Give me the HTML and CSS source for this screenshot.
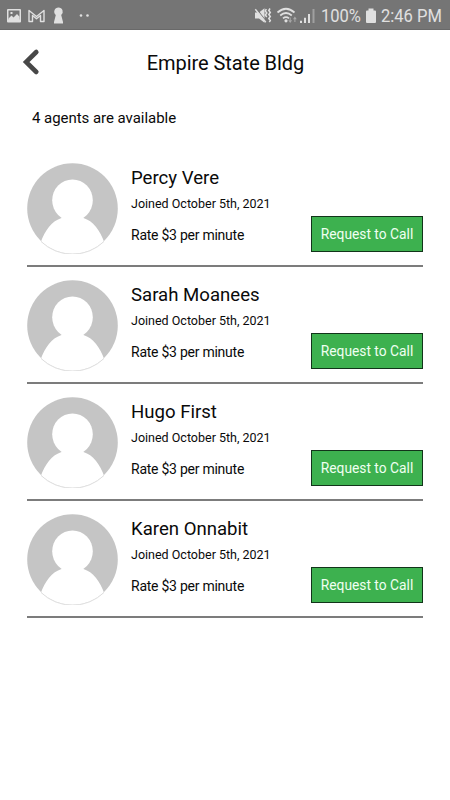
FILE: index.html
```
<!DOCTYPE html>
<html lang="en">
<head>
<meta charset="utf-8">
<title>Empire State Bldg</title>
<link rel="stylesheet" href="styles.css">
</head>
<body>
<svg class="defs" width="0" height="0" aria-hidden="true">
  <symbol id="avatar" viewBox="0 0 91 91">
    <clipPath id="disc"><circle cx="45.5" cy="45.5" r="45.3"/></clipPath>
    <g clip-path="url(#disc)">
      <rect width="91" height="91" fill="#c5c5c5"/>
      <ellipse cx="45.5" cy="37.3" rx="20.3" ry="20.8" fill="#fff"/>
      <path d="M13.500 80C18 67 25 58 34.500 55H56.500C66 58 73 67 77.500 80L91 91H0Z" fill="#fff"/>
    </g>
    <path d="M14 78.500A45.200 45.200 0 0 0 77 78.500" fill="none" stroke="#d4d4d4" stroke-width=".7"/>
  </symbol>
</svg>
<div class="status">
  <svg class="status-left" width="100" height="30" viewBox="0 0 100 30">
    <path fill-rule="evenodd" d="M8 9h12a1 1 0 0 1 1 1v11.500a1 1 0 0 1-1 1H8a1 1 0 0 1-1-1V10a1 1 0 0 1 1-1zM8.500 10.500v9h11v-9z"/>
    <path d="M8.500 20v-1.500l3-3 2 2 3.500-3.500 2.500 2.700V20zM10.500 12h2v2h-2z"/>
    <path d="M29 21.500V10.500l7.500 6 7.500-6v11h-3.500v-6l-4 3.300-4-3.300v6z" fill="none" stroke="#e0e0e0" stroke-width="1.400" stroke-linejoin="round"/>
    <path d="M58.500 7.500a4.300 4.300 0 0 1 2.700 7.600l1.800 6.900v1.500h-9V22l1.800-6.900a4.300 4.300 0 0 1 2.700-7.600z"/>
    <circle cx="81" cy="15.500" r="1.300"/><circle cx="87.500" cy="15.500" r="1.300"/>
  </svg>
  <svg class="status-icons" width="66" height="30" viewBox="254 0 66 30">
    <path d="M255 12.500h4l5.500-4.300v14.600l-5.500-4.300h-4z"/>
    <path d="M256.300 8.500l10 13" fill="none" stroke="#757575" stroke-width="1.200"/>
    <path d="M255.300 9.200l10.500 13" fill="none" stroke="#e0e0e0" stroke-width="1.400"/>
    <path d="M266.300 9l-1 2 1.500 2-1.500 2 1.500 2M270 8.500l-1.200 2 1.500 2-1.500 2 1.500 2-1.500 2 1.500 2-1 1.500" fill="none" stroke="#e0e0e0" stroke-width="1.500"/>
    <g fill="none" stroke="#e0e0e0" stroke-width="1.700">
      <path d="M277.500 12.500q8.500-7.500 17 0M280.200 15.500q5.800-5 11.600 0M283 18.300q3-2.500 6 0"/>
    </g>
    <circle cx="286" cy="20.800" r="1.600"/>
    <g fill="#aaa">
      <path d="M288.300 20.200h3.800l-1.900 2.800zM293 19.300h3.800l-1.900-2.800z"/>
      <path d="M289.700 17.500h1v3h-1zM294.400 19h1v3h-1z"/>
    </g>
    <path d="M300 20.800h2V23h-2zM304 17.800h2V23h-2zM308 14h2v9h-2z"/>
    <path d="M312.500 9h2v14h-2z" opacity=".4"/>
  </svg>
  <span class="status-text percent">100%</span>
  <svg class="battery" width="12" height="30" viewBox="0 0 12 30"><path d="M3.500 8.500h5v2H10q1 0 1 1V22q0 1-1 1H2q-1 0-1-1V11.500q0-1 1-1h1.500z"/></svg>
  <span class="status-text clock">2:46 PM</span>
</div>
<header class="header">
  <svg class="back" width="20" height="28" viewBox="0 0 20 28"><path d="M14.300 4L4.100 14l10.200 10" fill="none" stroke="#484848" stroke-width="4.600" stroke-linecap="round" stroke-linejoin="miter"/></svg>
  <h1 class="title">Empire State Bldg</h1>
</header>
<p class="count">4 agents are available</p>
<main class="agents">
  <article class="agent">
    <svg class="avatar"><use href="#avatar"/></svg>
    <div class="info"><h2 class="name">Percy Vere</h2><p class="joined">Joined October 5th, 2021</p><p class="rate">Rate $3 per minute</p></div>
    <button class="call">Request to Call</button>
  </article>
  <article class="agent">
    <svg class="avatar"><use href="#avatar"/></svg>
    <div class="info"><h2 class="name">Sarah Moanees</h2><p class="joined">Joined October 5th, 2021</p><p class="rate">Rate $3 per minute</p></div>
    <button class="call">Request to Call</button>
  </article>
  <article class="agent">
    <svg class="avatar"><use href="#avatar"/></svg>
    <div class="info"><h2 class="name">Hugo First</h2><p class="joined">Joined October 5th, 2021</p><p class="rate">Rate $3 per minute</p></div>
    <button class="call">Request to Call</button>
  </article>
  <article class="agent">
    <svg class="avatar"><use href="#avatar"/></svg>
    <div class="info"><h2 class="name">Karen Onnabit</h2><p class="joined">Joined October 5th, 2021</p><p class="rate">Rate $3 per minute</p></div>
    <button class="call">Request to Call</button>
  </article>
</main>
</body>
</html>
```
FILE: styles.css
```
* { box-sizing: border-box; margin: 0; padding: 0; }
body {
  width: 450px;
  height: 800px;
  overflow: hidden;
  background: #fff;
  color: #0a0a0a;
  font-family: Roboto, "Liberation Sans", sans-serif;
}
.defs { position: absolute; }
.status {
  display: flex;
  height: 30px;
  background: #757575;
  border-bottom: 1px solid #696969;
  fill: #e0e0e0;
  color: #e0e0e0;
}
.status svg { flex: none; display: block; }
.status-icons { margin-left: 154px; }
.status-text {
  flex: none;
  font-size: 19px;
  line-height: 32px;
  white-space: nowrap;
  transform: scaleX(.87);
  transform-origin: 0 50%;
}
.percent { width: 44px; margin-left: 1px; }
.clock { width: 64px; margin-left: 4px; }
.header {
  display: grid;
  grid-template-columns: 48px 1fr 48px;
  align-items: center;
  height: 64px;
}
.back { margin-left: 22px; }
.title {
  padding: 1px 0 0 1px;
  text-align: center;
  font-size: 20px;
  font-weight: 400;
  letter-spacing: -.06px;
}
.count {
  height: 56px;
  padding-left: 32px;
  font-size: 15px;
  line-height: 48px;
  letter-spacing: -.04px;
}
.agents { padding: 0 27px; }
.agent {
  display: flex;
  height: 117px;
  padding-top: 13px;
  border-bottom: 2px solid #7c7c7c;
}
.avatar { flex: none; width: 91px; height: 91px; }
.info { flex: 1; margin-left: 13px; padding-top: 1px; white-space: nowrap; }
.name { font-size: 18.6px; font-weight: 400; line-height: 28px; }
.joined { font-size: 12.5px; line-height: 24px; }
.rate { font-size: 14px; line-height: 38px; letter-spacing: -.25px; }
.call {
  flex: none;
  width: 112px;
  height: 36px;
  margin: 53px 0 0;
  border: 1px solid #12341a;
  background: #3db14f;
  color: #effff1;
  font: 13.8px Roboto, "Liberation Sans", sans-serif;
}
```
